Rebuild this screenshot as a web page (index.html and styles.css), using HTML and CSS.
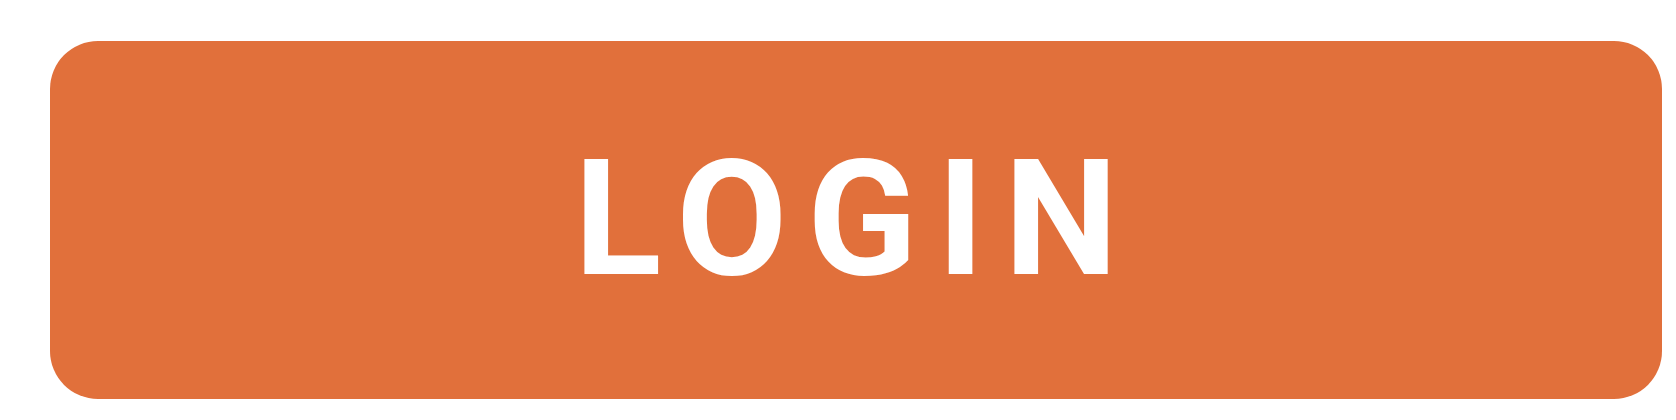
FILE: index.html
```html
<!DOCTYPE html>
<html lang="en">
<head>
<meta charset="utf-8">
<title>Login</title>
<link rel="stylesheet" href="styles.css">
</head>
<body>
<div class="page">
  <button class="login-btn" type="button">LOGIN</button>
</div>
</body>
</html>
```
FILE: styles.css
```css
html, body {
  margin: 0;
  padding: 0;
  background: #ffffff;
}
.page {
  width: 1676px;
  height: 420px;
  box-sizing: border-box;
  padding: 41px 14px 21px 50px;
  display: flex;
}
.login-btn {
  flex: 1;
  border: none;
  margin: 0;
  padding: 0 0 2px 0;
  border-radius: 48px;
  background: #e1703b;
  color: #ffffff;
  font-family: Roboto, "Liberation Sans", sans-serif;
  font-weight: 700;
  font-size: 161px;
  letter-spacing: 20px;
  line-height: normal;
  display: flex;
  align-items: center;
  justify-content: center;
  cursor: pointer;
}
```
